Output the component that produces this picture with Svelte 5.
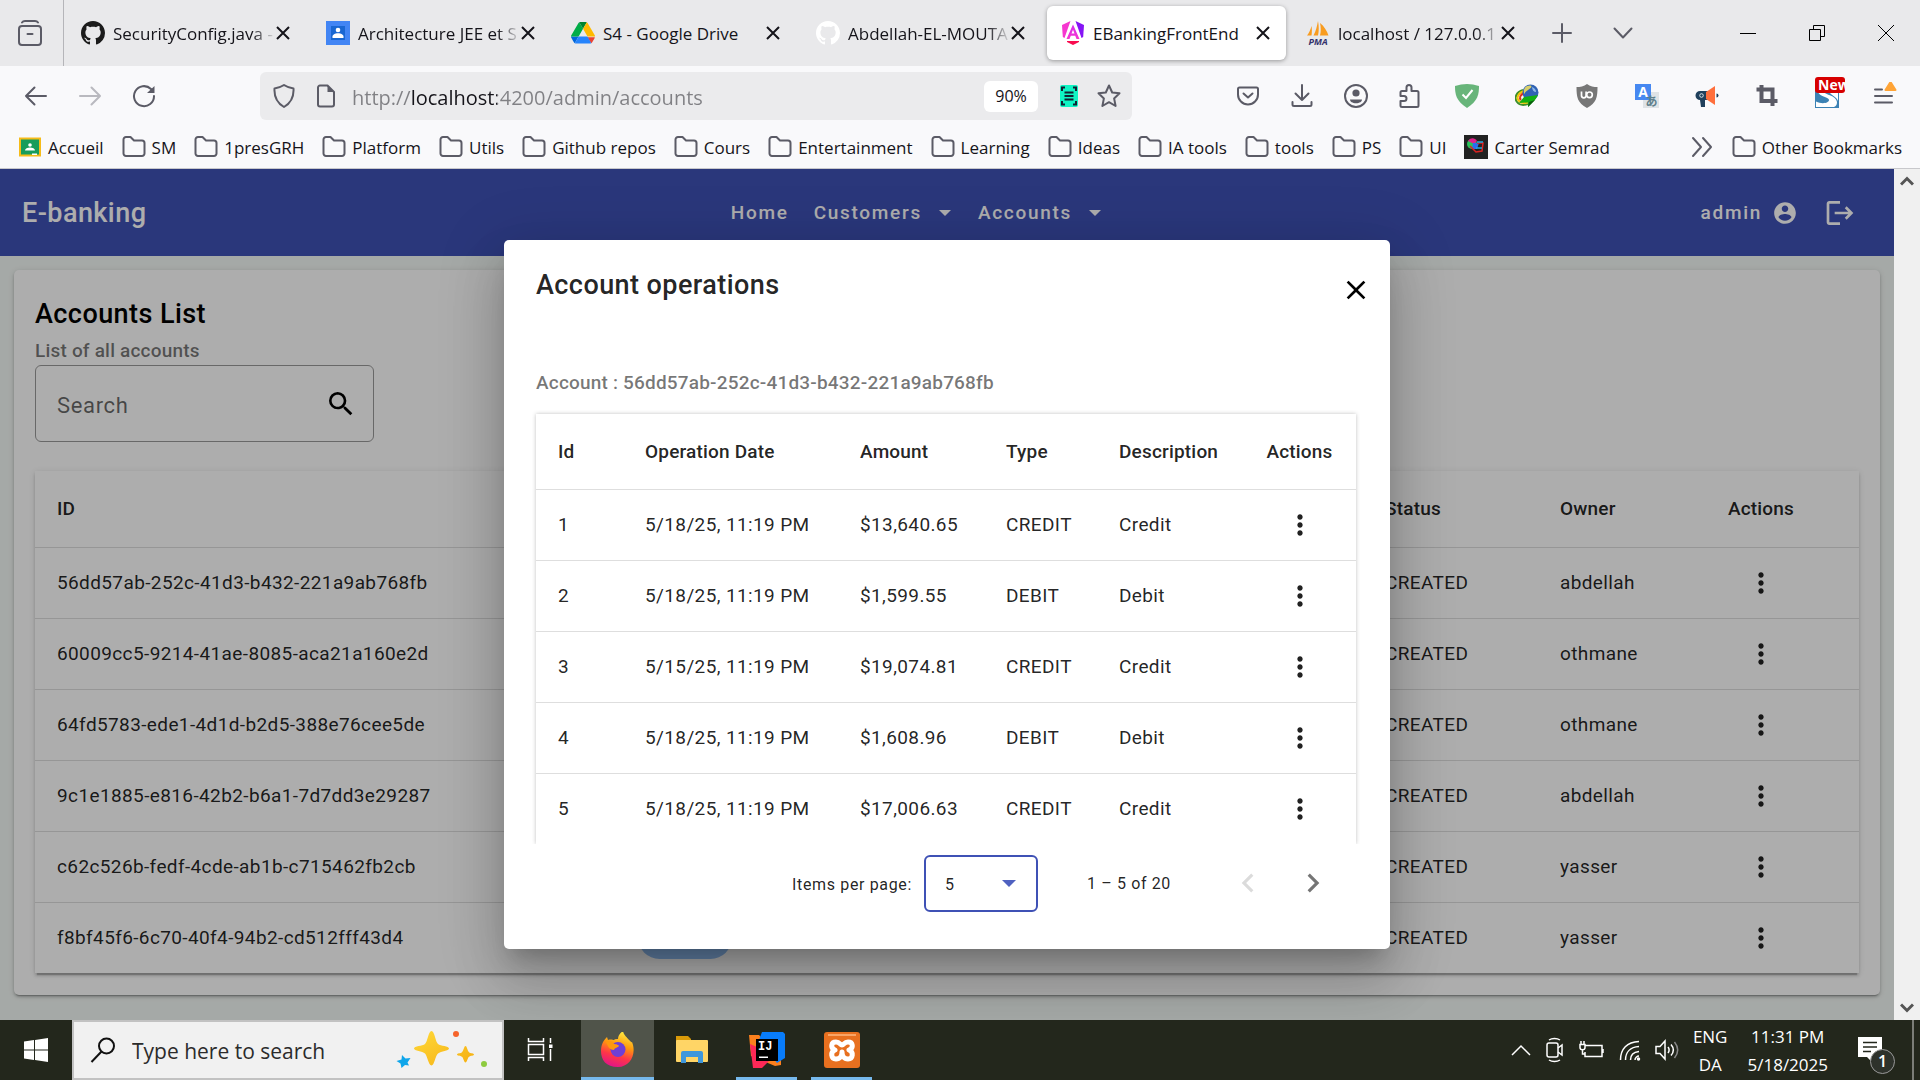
<script>
  const tabs = [
    { title: 'SecurityConfig.java -', icon: 'github', long: true },
    { title: 'Architecture JEE et S', icon: 'classroom', long: true },
    { title: 'S4 - Google Drive', icon: 'drive' },
    { title: 'Abdellah-EL-MOUTA', icon: 'githubLight', long: true },
    { title: 'EBankingFrontEnd', icon: 'angular', active: true },
    { title: 'localhost / 127.0.0.1', icon: 'pma', long: true }
  ];
  const tools = ['pocket', 'download', 'account', 'puzzle'];
  const extensions = ['adguard', 'idm', 'ublock', 'translate', 'horn', 'crop', 'snew'];
  const bookmarks = [
    { label: 'Accueil', icon: 'meetboard' },
    ...['SM', '1presGRH', 'Platform', 'Utils', 'Github repos', 'Cours', 'Entertainment', 'Learning', 'Ideas', 'IA tools', 'tools', 'PS', 'UI'].map((label) => ({ label, icon: 'folder' })),
    { label: 'Carter Semrad', icon: 'carter' }
  ];
  const accounts = [
    { id: '56dd57ab-252c-41d3-b432-221a9ab768fb', owner: 'abdellah' },
    { id: '60009cc5-9214-41ae-8085-aca21a160e2d', owner: 'othmane' },
    { id: '64fd5783-ede1-4d1d-b2d5-388e76cee5de', owner: 'othmane' },
    { id: '9c1e1885-e816-42b2-b6a1-7d7dd3e29287', owner: 'abdellah' },
    { id: 'c62c526b-fedf-4cde-ab1b-c715462fb2cb', owner: 'yasser' },
    { id: 'f8bf45f6-6c70-40f4-94b2-cd512fff43d4', owner: 'yasser' }
  ];
  const operations = [
    { id: 1, date: '5/18/25, 11:19 PM', amount: '$13,640.65', type: 'CREDIT', text: 'Credit' },
    { id: 2, date: '5/18/25, 11:19 PM', amount: '$1,599.55', type: 'DEBIT', text: 'Debit' },
    { id: 3, date: '5/15/25, 11:19 PM', amount: '$19,074.81', type: 'CREDIT', text: 'Credit' },
    { id: 4, date: '5/18/25, 11:19 PM', amount: '$1,608.96', type: 'DEBIT', text: 'Debit' },
    { id: 5, date: '5/18/25, 11:19 PM', amount: '$17,006.63', type: 'CREDIT', text: 'Credit' }
  ];
  let url = $state('http://localhost:4200/admin/accounts');
  let pageSize = $state('5');
</script>

{#snippet octocat(color)}
  <svg class="i24" viewBox="0 0 16 16"><path fill={color} d="M8 0C3.58 0 0 3.58 0 8c0 3.54 2.29 6.53 5.47 7.59.4.07.55-.17.55-.38 0-.19-.01-.82-.01-1.49-2.01.37-2.53-.49-2.69-.94-.09-.23-.48-.94-.82-1.13-.28-.15-.68-.52-.01-.53.63-.01 1.08.58 1.23.82.72 1.21 1.87.87 2.33.66.07-.52.28-.87.51-1.07-1.78-.2-3.64-.89-3.64-3.95 0-.87.31-1.59.82-2.15-.08-.2-.36-1.02.08-2.12 0 0 .67-.21 2.2.82.64-.18 1.32-.27 2-.27s1.36.09 2 .27c1.53-1.04 2.2-.82 2.2-.82.44 1.1.16 1.92.08 2.12.51.56.82 1.27.82 2.15 0 3.07-1.87 3.75-3.65 3.95.29.25.54.73.54 1.48 0 1.07-.01 1.93-.01 2.2 0 .21.15.46.55.38A8.01 8.01 0 0 0 16 8c0-4.42-3.58-8-8-8z"/></svg>
{/snippet}

{#snippet icon(name)}
  {#if name === 'github'}
    {@render octocat('#1b1b1b')}
  {:else if name === 'githubLight'}
    {@render octocat('#ffffff')}
  {:else if name === 'classroom'}
    <svg class="i24" viewBox="0 0 24 24"><path fill="#4285f4" d="M0 0h24v24H0z"/><path fill="#1967d2" d="M5 5h14v14H5z"/><circle cx="12" cy="9" r="2.3" fill="#fff"/><path fill="#fff" d="M6.500 17v-1.500c0-2 2.500-3.300 5.500-3.300s5.500 1.300 5.500 3.300V17z"/></svg>
  {:else if name === 'drive'}
    <svg class="i24" viewBox="0 0 87 80"><path fill="#0066da" d="M6.600 66.850 10.450 73.500c.8 1.400 1.950 2.500 3.300 3.300L27.500 53H0c0 1.550.4 3.100 1.200 4.500z"/><path fill="#00ac47" d="M43.650 25 29.900 1.200c-1.350.8-2.500 1.900-3.300 3.300L1.200 48.500A9 9 0 0 0 0 53h27.500z"/><path fill="#ea4335" d="M73.550 76.800c1.350-.8 2.500-1.900 3.300-3.300l8.100-14c.8-1.400 1.200-2.950 1.200-4.500H59.800l5.850 11.500z"/><path fill="#00832d" d="M43.650 25 57.400 1.200C56.050.4 54.500 0 52.900 0H34.400c-1.600 0-3.150.45-4.500 1.200z"/><path fill="#2684fc" d="M59.800 53H27.500L13.750 76.800c1.350.8 2.900 1.200 4.500 1.200h50.800c1.600 0 3.150-.45 4.500-1.200z"/><path fill="#ffba00" d="M73.400 26.500 60.700 4.500c-.8-1.400-1.950-2.500-3.300-3.300L43.650 25 59.800 53h27.450c0-1.550-.4-3.100-1.200-4.500z"/></svg>
  {:else if name === 'angular'}
    <svg class="i24" viewBox="0 0 24 24"><defs><linearGradient id="ng" x1="0" y1="0" x2="0" y2="1"><stop offset="0" stop-color="#d42bf0"/><stop offset="1" stop-color="#f637cf"/></linearGradient></defs><path fill="#f637cf" d="M1 4 9.500 0 3.500 17 1.800 16z"/><path fill="#8514f5" d="M23 4 14.500 0l6 17 1.700-1z"/><path fill="url(#ng)" fill-rule="evenodd" d="M12 3.500 5.500 18h3l1.300-3.200h4.400l1.300 3.200h3zm0 5.300 1.500 3.700h-3z"/><path fill="#f90b4f" d="M6 20h12v1l-6 3-6-3z"/></svg>
  {:else if name === 'pma'}
    <svg class="i24" viewBox="0 0 24 24"><path fill="#f89c20" d="M12 0c1 5 1 10 0 14.500H7.500C10 10 11 5 12 0zM14 2c4 3 7 8 8.500 12.500H14c1-4 1-8 0-12.500zM5.500 5c.5 3 .5 6 0 9.500H1C3 12 4.500 9 5.500 5z"/><text x="12" y="24" class="pmatext" text-anchor="middle">PMA</text></svg>
  {:else if name === 'pocket'}
    <svg class="i24 line" viewBox="0 0 24 24"><path d="M3.500 3.500h17A1.500 1.500 0 0 1 22 5v5.500a10 10 0 0 1-20 0V5a1.500 1.500 0 0 1 1.500-1.500z"/><path d="M7.500 9.500 12 13.500l4.500-4"/></svg>
  {:else if name === 'download'}
    <svg class="i24 line" viewBox="0 0 24 24"><path d="M12 1v15M5.500 9.500 12 16l6.500-6.500M2.500 18v2.500A1.500 1.500 0 0 0 4 22h16a1.500 1.500 0 0 0 1.500-1.500V18"/></svg>
  {:else if name === 'account'}
    <svg class="i24 line" viewBox="0 0 24 24"><circle cx="12" cy="12" r="11"/><circle cx="12" cy="9" r="3.600" class="solid"/><path class="solid" d="M6 15.500h12c0 2.200-2.500 3.700-6 3.700s-6-1.500-6-3.700z"/></svg>
  {:else if name === 'puzzle'}
    <svg class="i24 line" viewBox="0 0 24 24"><path d="M2.500 11V8.500A1.500 1.500 0 0 1 4 7h4.500V3.500a2.500 2.500 0 0 1 5 0V7H19a1.500 1.500 0 0 1 1.500 1.500v13A1.500 1.500 0 0 1 19 23H4a1.500 1.500 0 0 1-1.500-1.500V17H6a2.500 2.500 0 0 0 0-5H2.500z"/></svg>
  {:else if name === 'adguard'}
    <svg class="i24" viewBox="0 0 24 24"><path fill="#68b57a" d="M12 0c4 0 8 .7 12 2 0 8-1 15-12 22C1 17 0 10 0 2 4 .7 8 0 12 0z"/><path fill="none" stroke="#fff" stroke-width="2" d="M7.500 10.500 11 14l6.500-8"/></svg>
  {:else if name === 'idm'}
    <svg class="i24" viewBox="0 0 24 24"><path fill="none" stroke="#3d8f28" stroke-width="2" d="M8 6C1 8-1 14 2 18c3 4 8 3 11 2"/><path fill="none" stroke="#f2c505" stroke-width="2" d="M9 7C3 9 1 14 4 17c3 3 7 2 10 1"/><path fill="none" stroke="#d9351c" stroke-width="2" d="M9 9c-4 2-5 5-3 7"/><circle cx="15.500" cy="8.500" r="8" fill="#2f62b4"/><path fill="#d8cf6a" d="M12 2c4-1.500 6 0 3 2.500S11 6.500 9.500 10C8 7 9 3.500 12 2z"/><path fill="#8fb9e8" d="M17 3c3 1 4 3 4 5-2 0-4-2-4-5z"/><path fill="#12b012" d="m9 13 14-2-3 5-7 7v-4.500L4 19z"/><path fill="#0b5b0e" d="m13 23 7-7-6 2z"/></svg>
  {:else if name === 'ublock'}
    <svg class="i24" viewBox="0 0 24 24"><path fill="#777" d="M12 0c3 2.500 7 3 10.500 3 0 10-1 16-10.500 21C2.500 19 1.500 13 1.500 3 5 3 9 2.500 12 0z"/><path fill="none" stroke="#fff" stroke-width="1.700" d="M6.500 7.500v4a2.300 2.300 0 0 0 4.600 0v-4"/><circle cx="14.500" cy="10.800" r="2.800" fill="none" stroke="#fff" stroke-width="1.700"/></svg>
  {:else if name === 'translate'}
    <svg class="i24" viewBox="0 0 24 24"><path fill="#dfe3e6" d="M8 8h16v16H8z"/><path fill="#4688f1" d="M0 0h16v16H0z"/><text x="8" y="13" text-anchor="middle" class="tra">A</text><text x="16.500" y="22" text-anchor="middle" class="trb">あ</text></svg>
  {:else if name === 'horn'}
    <svg class="i24" viewBox="0 0 24 24"><path fill="#20405c" d="M5 7h9v9h-4v7H6l-1-7a4.500 4.500 0 0 1 0-9z"/><path fill="#ff6f3c" d="M11 8 20 2v19l-9-6z"/><path fill="#20405c" d="M21.500 9.500a2 2 0 0 1 0 4z"/><circle cx="6.500" cy="11.500" r="1.800" fill="none" stroke="#fff" stroke-width=".8"/></svg>
  {:else if name === 'crop'}
    <svg class="i24" viewBox="0 0 24 24"><path fill="none" stroke="#5b5b66" stroke-width="4" d="M6.500 1v16H22.500M1.500 5.500h16V22"/></svg>
  {:else if name === 'snew'}
    <span class="snew"><svg class="i24" viewBox="0 0 24 24"><path fill="#3c82b4" d="M0 0h24v24H0z"/><path fill="#fff" d="M1 17.500c6 3 13 1.500 13-1.500 0-3-9-3-11-8h6c1 3 12 3 13 10 0 3-1 4-3 5H1z"/><path fill="#fff" d="M14 8h9v9c-1-4-6-5-9-9z"/></svg><b>New</b></span>
  {:else if name === 'folder'}
    <svg class="i24 line" viewBox="0 0 24 24"><path d="M1.500 18.500v-14A2.500 2.500 0 0 1 4 2h4.500L12 5.500h8A2.500 2.500 0 0 1 22.500 8v10.500A2.500 2.500 0 0 1 20 21H4a2.500 2.500 0 0 1-2.500-2.500z"/></svg>
  {:else if name === 'meetboard'}
    <svg class="i24" viewBox="0 0 24 24"><path fill="#f6bb18" d="M1 2.500h22v19H1z"/><path fill="#179c5b" d="M3 4.500h18v15H3z"/><circle cx="12" cy="10" r="1.800" fill="#fff"/><path fill="#fff" d="M7 15.500c0-2 2.500-3 5-3s5 1 5 3zM14 18.500h5v1.500h-5z"/></svg>
  {:else if name === 'carter'}
    <svg class="i24" viewBox="0 0 24 24"><path fill="#222" d="M0 0h24v24H0z"/><circle cx="8" cy="9" r="5" fill="#29c45b"/><path fill="#e0218a" d="M4 6c3-4 7-3 9 0l-3 3z"/><path fill="#2c6cf0" d="M9 8h6l-2 6H8z"/><path fill="none" stroke="#d22" stroke-width="1.500" d="M6 11l6 6 6-1 1-8h-6"/><path stroke="#2ad" stroke-width="1.500" d="M13 7h6M12 13h6"/></svg>
  {/if}
{/snippet}

{#snippet dots()}
  <button class="dots" aria-label="Row actions"><svg viewBox="0 0 24 24" width="32" height="32"><path d="M12 8c1.100 0 2-.9 2-2s-.9-2-2-2-2 .9-2 2 .9 2 2 2zm0 2c-1.100 0-2 .9-2 2s.9 2 2 2 2-.9 2-2-.9-2-2-2zm0 6c-1.100 0-2 .9-2 2s.9 2 2 2 2-.9 2-2-.9-2-2-2z"/></svg></button>
{/snippet}

<div class="screen">
  <header class="tabstrip">
    <button class="view" aria-label="Firefox View"><svg class="i28 line" viewBox="0 0 28 28"><path d="M6 3.500c1-1.500 2-1.500 3-1.500h10c1 0 2 0 3 1.500"/><rect x="3" y="7" width="22" height="19" rx="3"/><path d="M11.500 15h5"/></svg></button>
    <nav class="tabs" aria-label="Tabs">
      {#each tabs as tab}
        <div class="tab" class:active={tab.active}>
          {@render icon(tab.icon)}
          <span class="tabtitle" class:long={tab.long}>{tab.title}</span>
          <button class="close" aria-label="Close tab"><svg width="14" height="14" viewBox="0 0 14 14"><path d="M1 1l12 12M13 1 1 13"/></svg></button>
        </div>
      {/each}
    </nav>
    <button class="strip" aria-label="New tab"><svg class="i24 line" viewBox="0 0 24 24"><path d="M12 3v18M3 12h18"/></svg></button>
    <button class="strip" aria-label="List all tabs"><svg class="i24 line" viewBox="0 0 24 24"><path d="m3.500 7.500 8.500 9 8.500-9"/></svg></button>
    <div class="wincontrols">
      <button aria-label="Minimize"><svg width="16" height="16" viewBox="0 0 16 16"><path d="M0 8.500h16"/></svg></button>
      <button aria-label="Restore"><svg width="16" height="16" viewBox="0 0 16 16"><path d="M.5 4.500h11v11H.5zM4.500 4V.5h11v11H12"/></svg></button>
      <button aria-label="Close"><svg width="16" height="16" viewBox="0 0 16 16"><path d="m0 0 16 16M16 0 0 16"/></svg></button>
    </div>
  </header>

  <div class="toolbar">
    <button class="tool" aria-label="Back"><svg class="i24 line" viewBox="0 0 24 24"><path d="M22 12H2M10.500 3.500 2 12l8.500 8.500"/></svg></button>
    <button class="tool off" aria-label="Forward"><svg class="i24 line" viewBox="0 0 24 24"><path d="M2 12h20M13.500 3.500 22 12l-8.500 8.500"/></svg></button>
    <button class="tool" aria-label="Reload"><svg class="i24 line" viewBox="0 0 24 24"><path d="M22 12a10 10 0 1 1-3-7l2 2"/><path class="solid" d="M22.500 2v7H15z"/></svg></button>
    <form class="urlbar">
      <svg class="i24 line" viewBox="0 0 24 24"><path d="M12 1c3 2 6 3 9.500 3.500.5 8-2 14-9.500 18.500C4.500 18.500 2 12.500 2.500 4.500 6 4 9 3 12 1z"/></svg>
      <svg class="i24 line" viewBox="0 0 24 24"><path d="M13.500 1.500H6A2 2 0 0 0 4 3.500v17a2 2 0 0 0 2 2h12a2 2 0 0 0 2-2V8z"/><path class="solid" d="M13.500 1.500V8H20z"/></svg>
      <input class="url" aria-label="Address" bind:value={url} />
      <button type="button" class="zoom">90%</button>
      <button type="button" class="plain" aria-label="Reader"><svg width="20" height="24" viewBox="0 0 20 24"><rect x="1" y="1" width="18" height="22" rx="2" fill="#0ff5c4"/><path fill="none" stroke="#123" stroke-width="2" d="M3 7V3.500h3M14 3.500h3V7M3 17v3.500h3M14 20.500h3V17M5.500 8.500h9M5.500 12h9M5.500 15.500h9"/></svg></button>
      <button type="button" class="plain" aria-label="Bookmark this page"><svg class="i24 line" viewBox="0 0 24 24"><path d="m12 1.500 3.200 7 7.300.8-5.400 5.100 1.500 7.600L12 18.200 5.400 22l1.500-7.600L1.500 9.300l7.300-.8z"/></svg></button>
    </form>
    {#each tools as name}<button class="tool" aria-label={name}>{@render icon(name)}</button>{/each}
    {#each extensions as name}<button class="tool wide" aria-label={name}>{@render icon(name)}</button>{/each}
    <button class="tool menu" aria-label="Menu"><svg width="28" height="28" viewBox="0 0 28 28" class="line"><path d="M5 7.500h7M5 14h17M5 20.500h17"/><path fill="#ffa436" stroke="#ffa436" d="M20.500 0 25.500 8h-10z"/></svg></button>
  </div>

  <nav class="bookmarks" aria-label="Bookmarks">
    {#each bookmarks as b}<a href="#{b.label}">{@render icon(b.icon)}<span>{b.label}</span></a>{/each}
    <button class="more" aria-label="More bookmarks"><svg class="i24 line" viewBox="0 0 24 24"><path d="m3 3 8 9-8 9M13 3l8 9-8 9"/></svg></button>
    <a href="#other">{@render icon('folder')}<span>Other Bookmarks</span></a>
  </nav>

  <div class="viewport">
    <div class="page">
      <nav class="navbar">
        <a href="#home" class="brand">E-banking</a>
        <div class="links">
          <a href="#home">Home</a>
          <button>Customers<svg width="12" height="6" viewBox="0 0 12 6"><path d="M0 0h12L6 6z"/></svg></button>
          <button>Accounts<svg width="12" height="6" viewBox="0 0 12 6"><path d="M0 0h12L6 6z"/></svg></button>
        </div>
        <div class="user">
          <button>admin<svg width="26" height="26" viewBox="0 0 24 24"><path d="M12 2C6.480 2 2 6.480 2 12s4.480 10 10 10 10-4.480 10-10S17.520 2 12 2zm0 3c1.660 0 3 1.340 3 3s-1.340 3-3 3-3-1.340-3-3 1.340-3 3-3zm0 14.200c-2.500 0-4.710-1.280-6-3.220.03-1.990 4-3.080 6-3.080 1.990 0 5.970 1.090 6 3.080-1.290 1.940-3.500 3.220-6 3.220z"/></svg></button>
          <button aria-label="Log out"><svg width="32" height="32" viewBox="0 0 24 24"><path d="m17 7-1.410 1.410L18.170 11H8v2h10.170l-2.580 2.580L17 17l5-5zM4 5h8V3H4c-1.100 0-2 .9-2 2v14c0 1.100.9 2 2 2h8v-2H4V5z"/></svg></button>
        </div>
      </nav>
      <main class="card">
        <h1>Accounts List</h1>
        <p class="subtitle">List of all accounts</p>
        <label class="search">
          <input placeholder="Search" aria-label="Search" />
          <svg width="32" height="32" viewBox="0 0 24 24"><path d="M15.500 14h-.79l-.28-.27A6.471 6.471 0 0 0 16 9.500 6.500 6.500 0 1 0 9.500 16c1.610 0 3.090-.59 4.230-1.570l.27.28v.79l5 4.990L20.490 19l-4.990-5zm-6 0C7.010 14 5 11.990 5 9.500S7.010 5 9.500 5 14 7.010 14 9.500 11.990 14 9.500 14z"/></svg>
        </label>
        <table class="accounts">
          <thead><tr><th class="w-id">ID</th><th></th><th class="w-status">Status</th><th class="w-owner">Owner</th><th class="w-act mid">Actions</th></tr></thead>
          <tbody>
            {#each accounts as a}
              <tr><td>{a.id}</td><td><span class="chip"></span></td><td>CREATED</td><td>{a.owner}</td><td class="mid">{@render dots()}</td></tr>
            {/each}
          </tbody>
        </table>
      </main>
      <div class="backdrop">
        <section class="dialog" role="dialog" aria-labelledby="dlg-title">
          <div class="dialoghead">
            <h2 id="dlg-title">Account operations</h2>
            <button class="plain" aria-label="Close dialog"><svg width="32" height="32" viewBox="0 0 24 24"><path d="M19 6.410 17.590 5 12 10.590 6.410 5 5 6.410 10.590 12 5 17.590 6.410 19 12 13.410 17.590 19 19 17.590 13.410 12z"/></svg></button>
          </div>
          <p class="accountline">Account : 56dd57ab-252c-41d3-b432-221a9ab768fb</p>
          <table class="operations">
            <thead><tr><th class="o-id">Id</th><th class="o-date">Operation Date</th><th class="o-amount">Amount</th><th class="o-type">Type</th><th class="o-text">Description</th><th class="mid">Actions</th></tr></thead>
            <tbody>
              {#each operations as o}
                <tr><td>{o.id}</td><td>{o.date}</td><td>{o.amount}</td><td>{o.type}</td><td>{o.text}</td><td class="mid">{@render dots()}</td></tr>
              {/each}
            </tbody>
          </table>
          <div class="paginator">
            <label for="size">Items per page:</label>
            <div class="selectwrap">
              <select id="size" bind:value={pageSize}><option>5</option><option>10</option><option>20</option></select>
              <svg width="14" height="7" viewBox="0 0 14 7"><path fill="#4f61c0" d="M0 0h14L7 7z"/></svg>
            </div>
            <span class="range">1 – 5 of 20</span>
            <button class="plain pg" disabled aria-label="Previous page"><svg width="38" height="38" viewBox="0 0 24 24"><path d="M15.410 7.410 14 6l-6 6 6 6 1.410-1.410L10.830 12z"/></svg></button>
            <button class="plain pg" aria-label="Next page"><svg width="38" height="38" viewBox="0 0 24 24"><path d="M10 6 8.590 7.410 13.170 12l-4.580 4.590L10 18l6-6z"/></svg></button>
          </div>
        </section>
      </div>
    </div>
    <div class="scrollbar">
      <svg width="14" height="14" viewBox="0 0 14 14"><path d="m1 9.500 6-6 6 6"/></svg>
      <svg width="14" height="14" viewBox="0 0 14 14"><path d="m1 4.500 6 6 6-6"/></svg>
    </div>
  </div>

  <footer class="taskbar">
    <button class="start" aria-label="Start"><svg width="24" height="24" viewBox="0 0 24 24"><path fill="#fff" d="M0 3.500 10 2v9.500H0zM11 1.900 24 0v11.500H11zM0 12.500h10V22L0 20.500zM11 12.500h13V24l-13-1.900z"/></svg></button>
    <label class="winsearch">
      <svg width="26" height="26" viewBox="0 0 26 26"><circle cx="16.500" cy="9" r="7.500"/><path d="M11.500 14.500 1.500 25"/></svg>
      <input placeholder="Type here to search" aria-label="Type here to search" />
      <svg class="spark" width="94" height="44" viewBox="0 0 94 44"><defs><linearGradient id="gold" x1="0" y1="0" x2="1" y2="1"><stop offset="0" stop-color="#ffd93a"/><stop offset="1" stop-color="#f5ae10"/></linearGradient></defs><path fill="url(#gold)" d="M35.500 3c3 0 4 11 6.500 13s11 2 11 4.500-8 2.500-11 5-3.500 12-6.500 12-4-9.500-6.500-12-11-2.500-11-5 8.500-2.500 11-4.500 3.500-13 6.500-13zM69.500 18c1.500 0 2 5 3.500 6.200s5 1 5 2.300-3.500 1-5 2.300-2 5.700-3.500 5.700-2-4.400-3.500-5.700-5-1-5-2.300 3.500-1.100 5-2.300 2-6.200 3.500-6.200z"/><path fill="#0fa5ea" d="m6 27 3.500 3.500 5-.5-3 4.500 1.500 3-4-.5-3.500 3-1-4.500-4-2.500 5-1.500z"/><circle cx="60" cy="6" r="3" fill="#f6642b"/><circle cx="88" cy="36" r="3" fill="#8ecb3f"/></svg>
    </label>
    <button class="app first" aria-label="Task view"><svg width="26" height="26" viewBox="0 0 26 26" fill="none" stroke="#fff" stroke-width="1.500"><path d="M1.500 1v3.500h15V1M1.500 7.500h15v10h-15zM1.500 24v-3.500h15V24M23.500 1v5M23.500 12v12"/><path fill="#fff" stroke="none" d="M22 7.500h3.500V11H22z"/></svg></button>
    <button class="app current" aria-label="Firefox"><svg width="34" height="36" viewBox="0 0 34 36"><defs><linearGradient id="ff" x1=".7" y1="0" x2=".4" y2="1"><stop offset="0" stop-color="#fff044"/><stop offset=".4" stop-color="#ff980e"/><stop offset=".7" stop-color="#ff3647"/><stop offset="1" stop-color="#e31587"/></linearGradient></defs><path fill="url(#ff)" d="M0 19C0 13 2 9 6 5l1 3c3-1 5 0 6 0 0-1 4-1 4-1 0-3 2-6 5-8 1 5 4 6 6 9 2 1 2 3 3 2 5 12-2 25-14 25S0 28 0 19z"/><circle cx="17" cy="17.500" r="7.500" fill="#6f3fd6"/><path fill="#ff980e" d="M5 10c3-2 6-1 8 2 2 0 5 1 5 2-1 2-4 1-5 4-4 0-6-3-8-8z"/></svg></button>
    <button class="app" aria-label="File Explorer"><svg width="34" height="30" viewBox="0 0 34 30"><path fill="#d99a09" d="M1 1h12l3 3v4H1z"/><rect x="1" y="5" width="32" height="22" rx="1" fill="#ffd566"/><path fill="#3e97dc" d="M6 28V18a2 2 0 0 1 2-2h18a2 2 0 0 1 2 2v10h-5v-6H11v6z"/></svg></button>
    <button class="app running" aria-label="IntelliJ IDEA"><svg width="36" height="36" viewBox="0 0 36 36"><path fill="#fc801d" d="M0 3h10l22 24v6l-6 1L2 24z"/><path fill="#fe2857" d="m1 12 14 6 5 11-7 7H4z"/><path fill="#087cfa" d="M13 0h21l2 2v24l-8 5L10 8z"/><path d="M7 7h22v22H7z"/><text x="9" y="18" class="ij">IJ</text><path fill="#fff" d="M10 24.500h9v1.500h-9z"/></svg></button>
    <button class="app running last" aria-label="XAMPP"><svg width="36" height="36" viewBox="0 0 36 36"><rect width="36" height="36" rx="3" fill="#e8701f"/><path fill="#f9a566" d="M4 2h28v2H4z"/><path fill="none" stroke="#fff" stroke-width="5" stroke-linecap="round" stroke-linejoin="round" d="M11 18c-5-2-4-8 1-8 4 0 4 3 6 3s2-3 6-3c5 0 6 6 1 8 5 2 4 9-1 9-4 0-6-3-6-7 0 4-2 7-6 7-5 0-6-7-1-9z"/></svg></button>
    <div class="tray">
      <svg width="20" height="20" viewBox="0 0 20 20"><path d="m1 15 9-9 9 9"/></svg>
      <svg width="20" height="26" viewBox="0 0 20 26"><rect x="2" y="6" width="11" height="14" rx="2"/><path d="m13 11 4-3v10l-4-3M4 3c3-2 8-2 11 0M4 23c3 2 8 2 11 0"/></svg>
      <svg width="26" height="20" viewBox="0 0 26 20"><path d="M6.500 5.500H23v11H6V12M24 9v4M2 1v3M5 1v3M1 4.500h5v3c0 3-5 3-5 0zM3.500 10v4h3"/></svg>
      <svg width="22" height="22" viewBox="0 0 22 22"><path d="M1.500 21C1.500 10 8 3 20 2.500M6.500 21c0-8 5-13 13.500-13.500M11.500 21c0-5 3-8 8.500-8.500M16 21c0-2 2-4 4-4"/><circle cx="19.500" cy="20" r="1" fill="#fff"/></svg>
      <svg width="24" height="22" viewBox="0 0 24 22"><path d="M1 7.500h4L10 2v18l-5-5.500H1zM13 8c1.500 2 1.500 4 0 6M16 5.500c3 3.500 3 7.500 0 11"/><path class="dim" d="M19.500 3c4 5 4 11 0 16"/></svg>
      <div class="lang"><span>ENG</span><span>DA</span></div>
      <div class="clock"><span>11:31 PM</span><span>5/18/2025</span></div>
      <button class="notes" aria-label="Notifications"><svg width="24" height="27" viewBox="0 0 24 27"><path fill="#fff" stroke="none" d="M0 0h24v20H15v6l-6-6H0z"/><path stroke="#23271c" d="M5 5.500h14M5 10h14M5 14.500h8"/></svg><span class="badge">1</span></button>
    </div>
  </footer>
</div>

<style>
  :global(body) { margin: 0; }
  :global(*) { box-sizing: border-box; }
  button { font: inherit; color: inherit; letter-spacing: inherit; background: none; border: 0; padding: 0; }
  input, select { font: inherit; color: inherit; letter-spacing: inherit; border: 0; background: none; outline: 0; padding: 0; min-width: 0; }
  a { color: inherit; text-decoration: none; }
  svg { display: block; flex: none; }
  .screen { min-height: 100vh; display: flex; flex-direction: column; font-family: "Open Sans", "Noto Sans", sans-serif; font-size: 17px; color: #15141a; overflow: hidden; }
  .i24 { width: 24px; height: 24px; }
  .i28 { width: 28px; height: 28px; }
  .line { fill: none; stroke: #5b5b66; stroke-width: 2; stroke-linejoin: round; stroke-linecap: round; }
  .solid { fill: #5b5b66; stroke: none; }
  .plain { display: flex; align-items: center; justify-content: center; }

  .tabstrip { height: 66px; background: #e9e9eb; display: flex; align-items: center; }
  .view { width: 64px; height: 66px; border-right: 1px solid #b5b5b9; display: flex; align-items: center; justify-content: center; padding-right: 4px; }
  .tabs { display: flex; gap: 6px; padding-left: 3px; }
  .tab { width: 239px; height: 54px; border-radius: 6px; display: flex; align-items: center; padding: 0 14px; gap: 8px; position: relative; }
  .tab.active { background: #fff; box-shadow: 0 1px 4px rgba(0, 0, 0, 0.35); }
  .tabtitle { flex: 1; white-space: nowrap; overflow: hidden; margin-right: 16px; }
  .tabtitle.long { mask-image: linear-gradient(to left, transparent, #000 24px); }
  .close { position: absolute; right: 16px; width: 14px; height: 14px; }
  .close path { stroke: #15141a; stroke-width: 2; }
  .strip { width: 61px; display: flex; justify-content: center; }
  .wincontrols { margin-left: auto; display: flex; }
  .wincontrols button { width: 69px; display: flex; justify-content: center; }
  .wincontrols path { fill: none; stroke: #000; stroke-width: 1; }

  .toolbar { height: 60px; background: #f9f9fb; display: flex; align-items: center; padding: 0 9px; }
  .tool { width: 54px; height: 48px; display: flex; align-items: center; justify-content: center; }
  .tool.wide { width: 60px; }
  .tool.off { opacity: 0.4; }
  .urlbar { flex: 1; min-width: 0; height: 48px; margin: 0 89px; background: #ebebed; border-radius: 6px; display: flex; align-items: center; gap: 18px; padding: 0 11px 0 12px; }
  .url { flex: 1; font-size: 20px; padding-top: 2px; color: transparent; background: linear-gradient(90deg, #808084 60px, #15141a 60px, #15141a 145px, #808084 145px); background-clip: text; -webkit-background-clip: text; margin-left: -4px; }
  .zoom { background: #fff; border-radius: 6px; height: 31px; width: 54px; margin-right: 3px; font-size: 16px; }
  .pmatext { font: italic bold 9px "Open Sans", sans-serif; fill: #34326b; }
  .tra { font: bold 14px "Open Sans", sans-serif; fill: #fff; }
  .trb { font: bold 12px "Noto Sans CJK JP", sans-serif; fill: #5f7f8c; }
  .snew { position: relative; }
  .snew b { position: absolute; left: 0; top: -7px; width: 30px; height: 16px; padding-left: 3px; line-height: 16px; font-size: 14px; background: #d70000; color: #fff; border-radius: 3px; overflow: hidden; text-align: left; }

  .bookmarks { height: 43px; background: #f9f9fb; border-bottom: 1px solid #c8c8cc; display: flex; align-items: center; gap: 18px; padding: 0 18px; white-space: nowrap; }
  .bookmarks a { display: flex; align-items: center; gap: 6px; }
  .more { margin-left: auto; }

  .viewport { flex: 1; display: flex; font-family: Roboto, sans-serif; font-size: 19px; }
  .page { flex: 1; position: relative; background: #f4f9f6; }
  .scrollbar { width: 26px; background: #f0f0f0; display: flex; flex-direction: column; justify-content: space-between; align-items: center; padding: 6px 0; }
  .scrollbar path { fill: none; stroke: #555; stroke-width: 3; }
  .navbar { height: 87px; background: #3f51b5; color: #fff; display: flex; align-items: center; justify-content: space-between; padding: 0 38px 0 22px; font-weight: 500; }
  .navbar svg { fill: #fff; }
  .brand, h1, h2 { font-size: 27px; font-weight: 500; letter-spacing: 0.016em; margin: 0; }
  .links, .user { display: flex; align-items: center; letter-spacing: 0.09em; }
  .links { gap: 25px; padding-right: 15px; }
  .links button { display: flex; align-items: center; gap: 17px; }
  .links button + button { margin-left: 2px; }
  .user { gap: 26px; }
  .user button { display: flex; align-items: center; gap: 10px; }

  .card { margin: 14px; margin-bottom: 25px; padding: 23px 21px 22px; background: #fff; border-radius: 5px; box-shadow: 0 3px 1px -2px rgba(0, 0, 0, 0.2), 0 2px 3px rgba(0, 0, 0, 0.2), 0 1px 6px rgba(0, 0, 0, 0.12); }
  h1 { line-height: 43px; color: #000; }
  .subtitle { margin: 0; line-height: 29px; font-weight: 500; color: rgba(0, 0, 0, 0.54); letter-spacing: 0.01em; }
  .search { width: 339px; height: 77px; border: 1px solid #9a9a9a; border-radius: 6px; display: flex; align-items: center; padding: 0 16px 0 21px; font-size: 22px; color: rgba(0, 0, 0, 0.87); }
  .search input { flex: 1; padding-top: 3px; letter-spacing: 0.03em; }
  .search input::placeholder { color: rgba(0, 0, 0, 0.6); opacity: 1; }
  table { border-collapse: collapse; table-layout: fixed; width: 100%; background: #fff; color: rgba(0, 0, 0, 0.87); box-shadow: 0 4px 1px -2px rgba(0, 0, 0, 0.2), 0 3px 3px rgba(0, 0, 0, 0.14), 0 1px 6px rgba(0, 0, 0, 0.12); }
  th, td { padding: 0 22px; text-align: left; white-space: nowrap; }
  th { height: 76px; font-weight: 500; letter-spacing: 0.01em; }
  td { height: 71px; letter-spacing: 0.02em; border-top: 1px solid #dedede; }
  .mid { text-align: center; padding: 0; }
  .accounts { margin-top: 29px; }
  .w-id { width: 581px; }
  .w-status { width: 175px; }
  .w-owner { width: 125px; }
  .w-act { width: 196px; }
  .chip { display: block; width: 94px; height: 43px; border-radius: 22px; background: #90bef5; }
  .dots { display: inline-block; vertical-align: middle; }
  .dots svg { fill: rgba(0, 0, 0, 0.87); }

  .backdrop { position: absolute; inset: 0; background: rgba(0, 0, 0, 0.32); display: flex; align-items: center; justify-content: center; overflow: hidden; }
  .dialog { width: 886px; background: #fff; border-radius: 5px; padding: 25px 34px 30px 32px; color: rgba(0, 0, 0, 0.87); box-shadow: 0 15px 20px -9px rgba(0, 0, 0, 0.2), 0 32px 51px 4px rgba(0, 0, 0, 0.14), 0 12px 62px 11px rgba(0, 0, 0, 0.12); }
  .dialoghead { display: flex; justify-content: space-between; align-items: center; height: 40px; margin-right: -16px; }
  .dialoghead .plain { align-self: flex-end; margin-bottom: -1px; }
  .accountline { margin: 62px 0 16px; line-height: 31px; font-weight: 500; color: rgba(0, 0, 0, 0.54); letter-spacing: 0.01em; }
  .operations { box-shadow: 0 0 4px rgba(0, 0, 0, 0.25); clip-path: inset(-4px -4px 0 -4px); }
  .operations th { height: 75px; }
  .o-id { width: 87px; }
  .o-date { width: 215px; }
  .o-amount { width: 146px; }
  .o-type { width: 113px; }
  .o-text { width: 146px; }
  .paginator { display: flex; align-items: center; justify-content: flex-end; height: 72px; margin-top: 3px; font-size: 16px; letter-spacing: 0.04em; padding-right: 11px; }
  .paginator label { padding-top: 2px; }
  .selectwrap { position: relative; width: 114px; height: 57px; border: 2px solid #3f51b5; border-radius: 6px; margin: 0 49px 0 12px; display: flex; align-items: center; }
  .selectwrap select { appearance: none; width: 100%; height: 100%; padding: 2px 0 0 19px; }
  .selectwrap svg { position: absolute; right: 20px; pointer-events: none; }
  .range { margin-right: 44px; }
  .pg { width: 65px; fill: rgba(0, 0, 0, 0.54); }
  .pg:disabled { fill: rgba(0, 0, 0, 0.14); }

  .taskbar { height: 60px; background: #23271c; color: #fff; display: flex; align-items: stretch; }
  .start { width: 72px; display: flex; align-items: center; justify-content: center; }
  .winsearch { width: 432px; background: #f1f1f1; border: 2px solid #c2c2c2; display: flex; align-items: center; padding: 0 12px 0 16px; gap: 16px; }
  .winsearch input { flex: 1; font-size: 21px; padding-top: 2px; }
  .winsearch input::placeholder { color: #2b2b2b; opacity: 1; }
  .winsearch svg:first-child { fill: none; stroke: #111; stroke-width: 2; }
  .app { width: 61px; margin: 0 7px; display: flex; align-items: center; justify-content: center; }
  .app.first { width: 72px; margin: 0 5px 0 0; }
  .app.current { width: 73px; margin: 0; background: #50544a; border-bottom: 3px solid #76b9ed; padding-top: 3px; }
  .app.running { border-bottom: 3px solid #76b9ed; padding-top: 3px; }
  .ij { font: bold 12px "Liberation Mono", monospace; fill: #fff; }
  .tray { margin-left: auto; display: flex; align-items: center; gap: 14px; padding-right: 6px; }
  .tray svg { fill: none; stroke: #fff; stroke-width: 1.5; }
  .tray .dim { stroke: #888; }
  .lang, .clock { display: flex; flex-direction: column; align-items: center; line-height: 28px; padding-top: 2px; }
  .clock { margin-left: 6px; }
  .notes { position: relative; margin-left: 16px; height: 60px; width: 56px; border-right: 2px solid #7b7d77; display: flex; align-items: center; }
  .badge { position: absolute; left: 12px; top: 29px; width: 25px; height: 25px; line-height: 23px; border-radius: 50%; background: #2e322b; border: 1px solid #999; text-align: center; font-size: 16px; font-weight: 600; }
</style>
